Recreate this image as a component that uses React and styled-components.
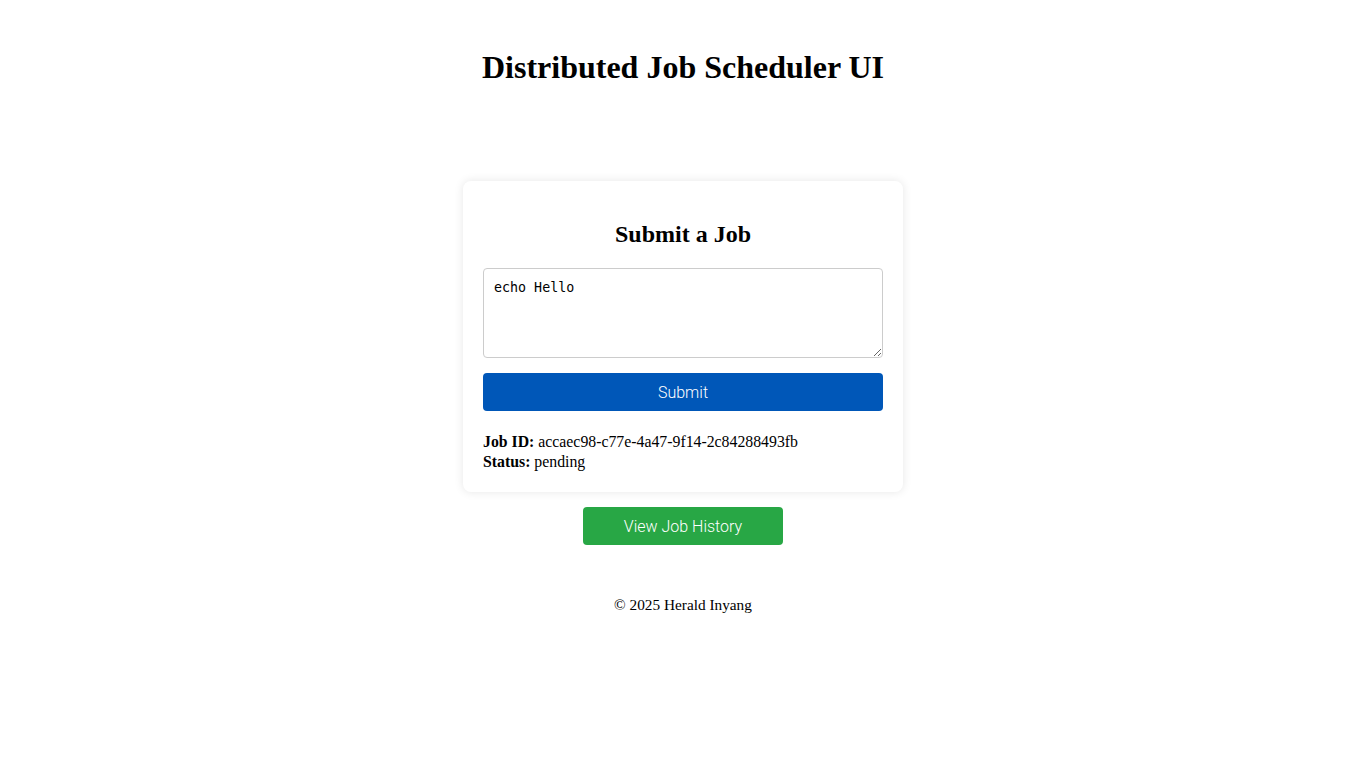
import React, { useState } from "react";
import styled, { createGlobalStyle } from "styled-components";

const GlobalStyle = createGlobalStyle`
  body {
    margin: 0;
    background: #ffffff;
    font-family: "Liberation Serif", "Times New Roman", serif;
    color: #000;
  }
`;

const Page = styled.div`
  display: flex;
  flex-direction: column;
  align-items: center;
  padding: 28px 20px 20px;
`;

const Title = styled.h1`
  font-size: 32px;
  font-weight: bold;
  margin: 21px 0;
  text-align: center;
`;

const Main = styled.main`
  display: flex;
  flex-direction: column;
  align-items: center;
  margin-top: 74px;
`;

const Card = styled.div`
  width: 440px;
  box-sizing: border-box;
  padding: 20px;
  background: #fff;
  border-radius: 8px;
  box-shadow: 0 0 10px rgba(0, 0, 0, 0.1);
`;

const CardTitle = styled.h2`
  font-size: 24px;
  font-weight: bold;
  text-align: center;
  margin: 20px 0;
`;

const CommandInput = styled.textarea`
  display: block;
  width: 100%;
  height: 90px;
  box-sizing: border-box;
  padding: 11px 10px 10px;
  border: 1px solid #ccc;
  border-radius: 4px;
  font-family: "DejaVu Sans Mono", "Liberation Mono", monospace;
  font-size: 13.33px;
  resize: vertical;
`;

const Button = styled.button`
  display: block;
  width: ${(p) => p.$width || "100%"};
  height: 38px;
  margin-top: 15px;
  border: none;
  border-radius: 4px;
  background: ${(p) => p.$bg};
  color: #fff;
  font-family: Roboto, "Liberation Sans", Arial, sans-serif;
  font-weight: 300;
  font-size: 16px;
  cursor: pointer;
`;

const Info = styled.div`
  margin-top: 21px;
  font-size: 15.8px;
  line-height: 20px;
`;

const Footer = styled.footer`
  margin-top: 51px;
  font-size: 15.3px;
  text-align: center;
`;

export default function App() {
  const [command, setCommand] = useState("echo Hello");
  return (
    <>
      <GlobalStyle />
      <Page>
        <Title>Distributed Job Scheduler UI</Title>
        <Main>
          <Card>
            <CardTitle>Submit a Job</CardTitle>
            <CommandInput
              value={command}
              onChange={(e) => setCommand(e.target.value)}
            />
            <Button $bg="#0057b8">Submit</Button>
            <Info>
              <div>
                <strong>Job ID:</strong> accaec98-c77e-4a47-9f14-2c84288493fb
              </div>
              <div>
                <strong>Status:</strong> pending
              </div>
            </Info>
          </Card>
          <Button $bg="#28a745" $width="200px">
            View Job History
          </Button>
          <Footer>© 2025 Herald Inyang</Footer>
        </Main>
      </Page>
    </>
  );
}
